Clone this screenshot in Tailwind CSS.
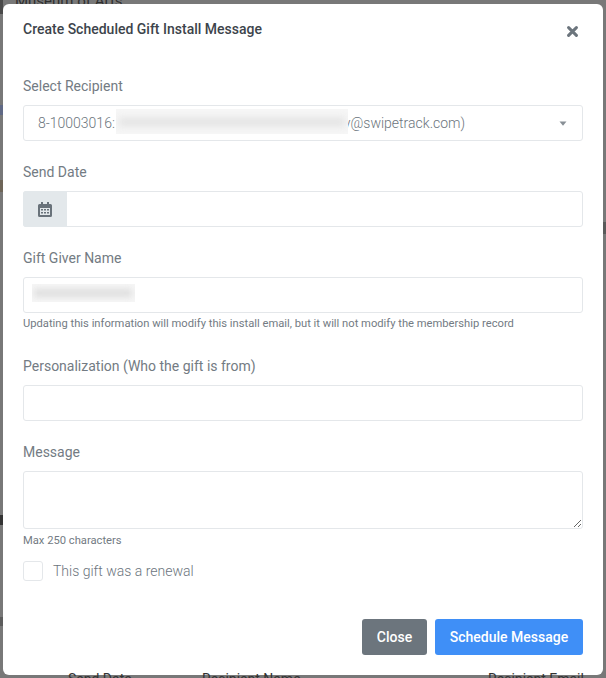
<!DOCTYPE html>
<html>
<head>
<meta charset="utf-8">
<script src="https://cdn.jsdelivr.net/npm/@tailwindcss/browser@4"></script>
</head>
<body class="m-0 p-0">
<div class="relative w-[606px] h-[678px] overflow-hidden bg-[#787878] font-['Roboto','Liberation_Sans',sans-serif]">
  <div class="absolute left-[15px] top-[-9px] text-[15px] leading-[20px] text-[#2f2f2f]">Museum of Arts</div>
  <div class="absolute left-0 top-0 w-[3px] h-[14px] bg-[#4a4a4a]"></div>
  <div class="absolute left-0 top-[105px] w-[3px] h-[10px] bg-[#55628a]/70"></div>
  <div class="absolute left-0 top-[180px] w-[3px] h-[12px] bg-[#6e6558]"></div>
  <div class="absolute left-0 top-[515px] w-[3px] h-[10px] bg-[#333]"></div>
  <div class="absolute left-0 top-[617px] w-[3px] h-[9px] bg-[#5c5c5c]"></div>
  <div class="absolute right-0 top-[222px] w-[3px] h-[12px] bg-[#5a5a5a]"></div>

  <div class="absolute left-[3px] top-[4px] w-[600px] h-[671px] bg-white rounded-[6px] px-5 flex flex-col">
    <div class="flex items-start justify-between h-[72px] pt-[15px]">
      <h5 class="text-[14px] leading-[21px] font-medium text-[#3d444b]">Create Scheduled Gift Install Message</h5>
      <svg class="mt-[7px] mr-[5px]" width="11" height="11" viewBox="0 0 11 11"><path d="M1.6 1.6L9.4 9.4M9.4 1.6L1.6 9.4" stroke="#6c757d" stroke-width="3" stroke-linecap="round"/></svg>
    </div>

    <label class="block text-[14px] leading-[21px] text-[#737b83] mb-2">Select Recipient</label>
    <div class="relative flex items-center h-9 border border-[#e4e7ea] rounded-[3px] pl-[14px] pr-[14px] mb-[21px] text-[14px] font-light text-[#6c757d]">
      <span>8-10003016:</span><span class="ml-[101px] pl-[128px]">y@swipetrack.com)</span>
      <svg class="ml-auto mr-[1px]" width="8" height="5" viewBox="0 0 8 5"><path d="M0.5 0.5H7.5L4 4.7Z" fill="#888f96"/></svg>
      <div class="absolute left-[92px] top-[3px] w-[232px] h-[25px] bg-[#f6f6f6] overflow-hidden">
        <div class="w-[226px] h-[10px] mt-[8px] ml-[3px] bg-[#e6e6e6] blur-[3px]"></div>
      </div>
    </div>

    <label class="block text-[14px] leading-[21px] text-[#737b83] mb-2">Send Date</label>
    <div class="flex h-9 border border-[#e4e7ea] rounded-[3px] mb-[21px]">
      <div class="w-[44px] -ml-px -my-px bg-[#e3e8eb] rounded-l-[3px] flex items-center justify-center">
        <svg width="14" height="15" viewBox="0 0 14 15"><path fill="#69727a" fill-rule="evenodd" d="M3 0h2v2h4V0h2v2h1.5A1.5 1.5 0 0 1 14 3.5v10a1.5 1.5 0 0 1-1.5 1.5h-11A1.5 1.5 0 0 1 0 13.5v-10A1.5 1.5 0 0 1 1.5 2H3V0zM2 6v7h10V6H2z"/><path fill="#69727a" d="M3 7h2v1.5H3zM6 7h2v1.5H6zM9 7h2v1.5H9zM3 10h2v1.5H3zM6 10h2v1.5H6zM9 10h2v1.5H9z"/></svg>
      </div>
      <div class="flex-1"></div>
    </div>

    <label class="block text-[14px] leading-[21px] text-[#737b83] mb-2">Gift Giver Name</label>
    <div class="relative h-9 border border-[#e4e7ea] rounded-[3px]">
      <div class="absolute left-[8px] top-[6px] w-[103px] h-[18px] bg-[#f6f6f6] overflow-hidden">
        <div class="w-[98px] h-[8px] mt-[5px] ml-[2px] bg-[#dedede] blur-[3px]"></div>
      </div>
    </div>
    <p class="text-[11.2px] leading-[16px] text-[#737b83] mt-[3px] mb-[24px]">Updating this information will modify this install email, but it will not modify the membership record</p>

    <label class="block text-[14px] leading-[21px] text-[#737b83] mb-2">Personalization (Who the gift is from)</label>
    <div class="h-9 border border-[#e4e7ea] rounded-[3px] mb-[21px]"></div>

    <label class="block text-[14px] leading-[21px] text-[#737b83] mb-2">Message</label>
    <textarea class="block w-full h-[58px] border border-[#e4e7ea] rounded-[3px] outline-none resize-y"></textarea>
    <p class="text-[11.2px] leading-[16px] text-[#737b83] mt-[4px] mb-[12px]">Max 250 characters</p>

    <div class="flex items-center">
      <span class="w-5 h-5 border border-[#e4e7ea] rounded-[3px]"></span>
      <span class="ml-[10px] text-[14px] leading-[20px] font-light text-[#6c757d]">This gift was a renewal</span>
    </div>

    <div class="flex justify-end gap-2 mt-[38px]">
      <button class="w-[65px] h-9 rounded-[3px] bg-[#6c757d] text-white text-[14px] font-medium">Close</button>
      <button class="w-[148px] h-9 rounded-[3px] bg-[#3f8ff7] text-white text-[14px] font-medium">Schedule Message</button>
    </div>
  </div>

  <div class="absolute left-[68px] top-[671px] text-[14px] leading-[16px] text-[#333]">Send Date</div>
  <div class="absolute left-[202px] top-[671px] text-[14px] leading-[16px] text-[#333]">Recipient Name</div>
  <div class="absolute left-[488px] top-[671px] text-[14px] leading-[16px] text-[#333]">Recipient Email</div>
</div>
</body>
</html>
